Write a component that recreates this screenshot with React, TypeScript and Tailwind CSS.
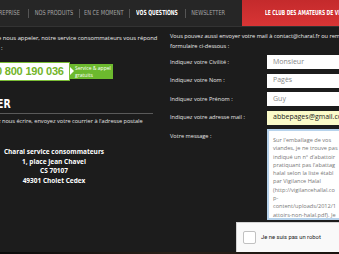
import React from 'react'

const body = { fontFamily: '"Open Sans", "DejaVu Sans", sans-serif' }
const cond = { fontFamily: '"DejaVu Sans Condensed", "Liberation Sans", sans-serif' }

// largeurs relevées sur la maquette
const navItems = [
  { label: 'NOS PRODUITS', w: 'w-[35px]' },
  { label: 'EN CE MOMENT', w: 'w-[34px]' },
  { label: 'VOS QUESTIONS', w: 'w-[40px]', active: true },
  { label: 'NEWSLETTER', w: 'w-[30px]' },
]

function Field({ label, value, yellow }: { label: string; value: string; yellow?: boolean }) {
  return (
    <div className="flex items-center h-[14px] mb-[4.5px]">
      <div className="w-[97px] text-[5.6px] text-[#e6e6e6] whitespace-nowrap">{label}</div>
      <div
        className={`flex-1 h-[14px] flex items-center pl-[6px] text-[7px] ${
          yellow ? 'bg-[#fbfbc9] text-[#222]' : 'bg-white text-[#888]'
        }`}
      >
        {value}
      </div>
    </div>
  )
}

export default function App() {
  const msg = [
    "Sur l'emballage de vos",
    'viandes, je ne trouve pas',
    "indiqué un n° d'abattoir",
    "pratiquant pas l'abattag",
    'halal selon la liste établ',
    'par Vigilance Halal',
    '(http://vigilancehallal.co',
    'p-',
    'content/uploads/2012/1',
    'attoirs-non-halal.pdf). Je',
  ]

  return (
    <div className="w-[339px] h-[254px] overflow-hidden bg-[#1c1c1c] flex flex-col" style={body}>
      {/* barre de navigation */}
      <div className="h-[27px] shrink-0 flex bg-[#262626] border-b border-[#333]">
        <div className="flex items-center w-[242px]" style={cond}>
          <div className="w-[20px] flex justify-end shrink-0">
            <span className="inline-block origin-right scale-x-[0.8] text-[7px] whitespace-nowrap text-[#a3a3a3]">
              ENTREPRISE
            </span>
          </div>
          {navItems.map((item) => (
            <React.Fragment key={item.label}>
              <span className="w-px h-[9px] bg-[#555] mx-[7.5px] shrink-0" />
              <div className={`${item.w} shrink-0 flex justify-center`}>
                <span
                  className={`inline-block scale-x-[0.8] text-[7px] whitespace-nowrap ${
                    item.active ? 'text-white font-bold scale-x-[0.72]' : 'text-[#a3a3a3]'
                  }`}
                >
                  {item.label}
                </span>
              </div>
            </React.Fragment>
          ))}
        </div>
        <div className="flex-1 bg-gradient-to-b from-[#c42a2c] to-[#d83535] flex items-center pl-[23px] overflow-hidden">
          <span
            className="inline-block origin-left scale-x-[0.7] text-white font-bold text-[7px] whitespace-nowrap"
            style={cond}
          >
            LE CLUB DES AMATEURS DE VIANDE
          </span>
        </div>
      </div>

      <div className="flex flex-1 min-h-0">
        {/* colonne gauche */}
        <div className="w-[160px] shrink-0 flex flex-col pt-[6px] ml-[-2px]">
          <p className="text-[5.8px] leading-[10px] text-[#eee] whitespace-nowrap">
            e nous appeler, notre service consommateurs vous répond
          </p>
          <p className="text-[5.8px] leading-[10px] text-[#eee]">i :</p>
          <div className="flex items-center mt-[9px] ml-[-6px]">
            <div className="h-[19px] w-[78px] bg-white border border-[#7bbd36] flex items-center pl-[3px] overflow-hidden">
              <span
                className="text-[#72b42a] font-bold text-[11px] leading-none whitespace-nowrap tracking-[-0.2px]"
                style={{ fontFamily: '"Liberation Sans", Arial, sans-serif' }}
              >
                0 800 190 036
              </span>
            </div>
            <div className="relative h-[15px] w-[43px] bg-[#6cb92e] flex flex-col justify-center pl-[5px] overflow-hidden">
              <span className="absolute left-0 top-[3px] w-0 h-0 border-y-[4.5px] border-y-transparent border-l-[4px] border-l-white" />
              <span className="text-white text-[5px] leading-[6.3px] whitespace-nowrap">Service &amp; appel</span>
              <span className="text-white text-[5px] leading-[6.3px]">gratuits</span>
            </div>
          </div>
          <div className="mt-[15px] text-white text-[13px] leading-[15px] font-bold ml-[-1px]">
            <span className="inline-block origin-left scale-x-[0.8]" style={cond}>ER</span>
          </div>
          <div className="h-px bg-[#5a5a5a] w-[155px] mt-[2px]" />
          <p className="text-[5.6px] leading-[10px] text-[#e6e6e6] mt-[2px] whitespace-nowrap">
            z nous écrire, envoyez votre courrier à l'adresse postale
          </p>
          <div className="mt-[21px] w-[112px] text-center text-white font-bold text-[6.5px] leading-[9.5px]">
            <p className="whitespace-nowrap">Charal service consommateurs</p>
            <p>1, place Jean Chavel</p>
            <p>CS 70107</p>
            <p>49301 Cholet Cedex</p>
          </div>
        </div>

        {/* colonne droite */}
        <div className="w-[220px] shrink-0 flex flex-col pt-[4px] ml-[12px]">
          <p className="text-[5.6px] leading-[10px] text-[#eee] whitespace-nowrap">
            Vous pouvez aussi envoyer votre mail à contact@charal.fr ou remplir le
          </p>
          <p className="text-[5.6px] leading-[10px] text-[#eee]">formulaire ci-dessous :</p>
          <div className="mt-[4px]">
            <Field label="Indiquez votre Civilité :" value="Monsieur" />
            <Field label="Indiquez votre Nom :" value="Pagès" />
            <Field label="Indiquez votre Prénom :" value="Guy" />
            <Field label="Indiquez votre adresse mail :" value="abbepages@gmail.com" yellow />
            <div className="flex">
              <div className="w-[97px] text-[5.6px] text-[#e6e6e6] pt-[3px]">Votre message :</div>
              <div className="flex-1 h-[91px] bg-white border-2 border-[#b7d3ec] pl-[4px] pt-[5px] overflow-hidden">
                {msg.map((l, i) => (
                  <p key={i} className="text-[5.6px] leading-[8.3px] text-[#777] whitespace-nowrap">
                    {l}
                  </p>
                ))}
              </div>
            </div>
            <div className="ml-[66px] mt-[2px] w-[120px] h-[31px] bg-[#f9f9f9] border border-[#d3d3d3] flex items-center pl-[6px] gap-[5px]">
              <span className="w-[13px] h-[13px] bg-white border border-[#c1c1c1] rounded-[2px]" />
              <span className="text-[5.8px] text-[#222]" style={{ fontFamily: 'Roboto, sans-serif' }}>
                Je ne suis pas un robot
              </span>
            </div>
          </div>
        </div>
      </div>
      <div className="h-[2px] shrink-0 bg-gradient-to-r from-[#0a0a0a] via-[#2a2018] to-[#1a1410]" />
    </div>
  )
}
